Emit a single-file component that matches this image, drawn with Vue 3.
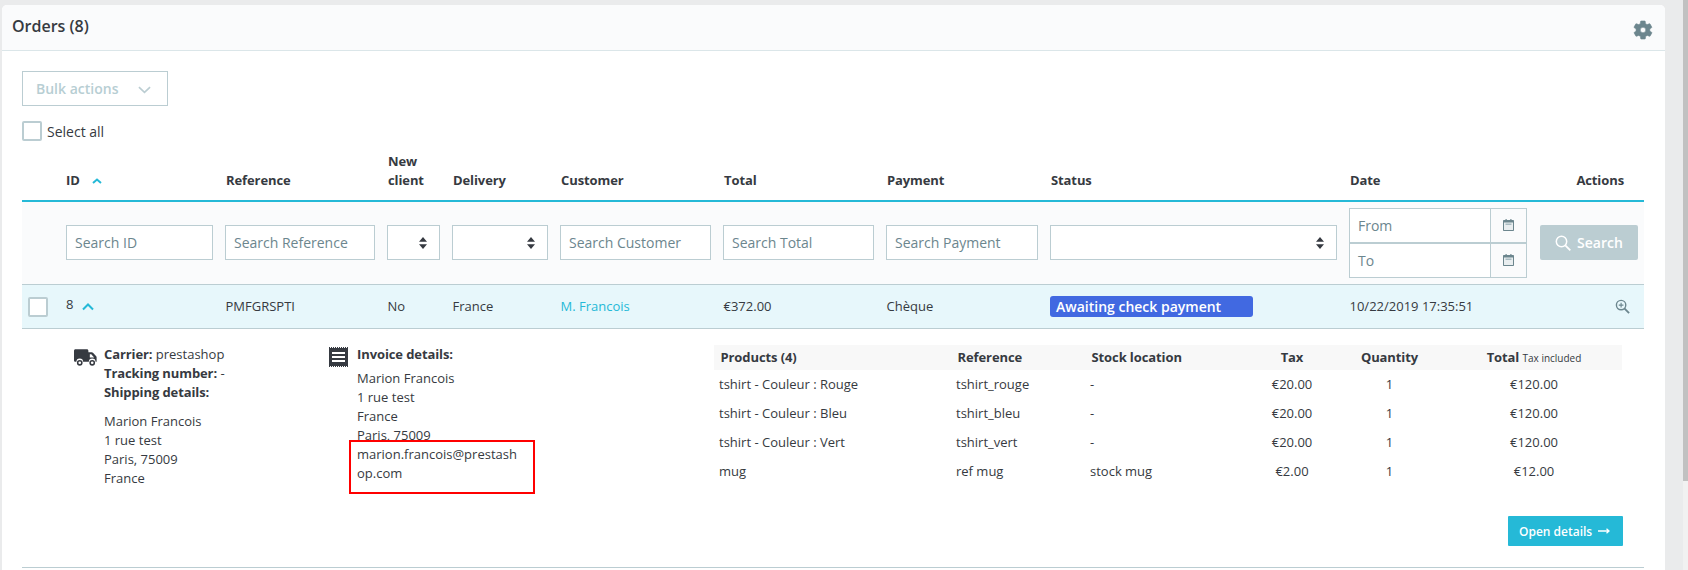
<script setup>
const columns = [
  { label: 'ID', ph: 'Search ID', type: 'input', sort: true },
  { label: 'Reference', ph: 'Search Reference', type: 'input' },
  { label: 'New client', type: 'select' },
  { label: 'Delivery', type: 'select' },
  { label: 'Customer', ph: 'Search Customer', type: 'input' },
  { label: 'Total', ph: 'Search Total', type: 'input' },
  { label: 'Payment', ph: 'Search Payment', type: 'input' },
  { label: 'Status', type: 'select' }
]
const products = [
  ['tshirt - Couleur : Rouge', 'tshirt_rouge', '-', '€20.00', '1', '€120.00'],
  ['tshirt - Couleur : Bleu', 'tshirt_bleu', '-', '€20.00', '1', '€120.00'],
  ['tshirt - Couleur : Vert', 'tshirt_vert', '-', '€20.00', '1', '€120.00'],
  ['mug', 'ref mug', 'stock mug', '€2.00', '1', '€12.00']
]
</script>

<template>
  <div class="page">
    <section class="card">
      <header class="card-head">
        <h3>Orders (8)</h3>
        <svg class="gear" viewBox="0 0 24 24"><path fill="#6c868e" stroke="#6c868e" stroke-width=".6" d="M19.4 13c.1-.3.1-.7.1-1s0-.7-.1-1l2.100-1.600c.2-.2.300-.4.100-.6l-2-3.500c-.1-.2-.4-.3-.6-.2l-2.500 1c-.5-.4-1.100-.7-1.700-1l-.4-2.600c0-.3-.2-.4-.5-.4h-4c-.2 0-.5.100-.5.400l-.4 2.600c-.6.300-1.200.600-1.700 1l-2.500-1c-.2-.1-.5 0-.6.200l-2 3.500c-.1.200-.1.400.1.600L4.500 11c0 .3-.1.700-.1 1s0 .7.1 1l-2.100 1.600c-.2.200-.3.400-.1.600l2 3.500c.1.200.4.300.6.200l2.500-1c.5.400 1.100.7 1.700 1l.4 2.600c0 .3.300.4.500.4h4c.3 0 .5-.1.500-.4l.4-2.600c.6-.3 1.200-.6 1.700-1l2.500 1c.2.100.5 0 .6-.2l2-3.500c.1-.2.100-.4-.1-.6L19.400 13zM12 15a3 3 0 1 1 0-6 3 3 0 0 1 0 6z"/></svg>
      </header>

      <div class="card-body">
        <button class="bulk" type="button">
          <span>Bulk actions</span>
          <svg viewBox="0 0 14 8" class="bulk-caret"><path d="M1 1 7 6.500 13 1" fill="none" stroke="#bbcdd2" stroke-width="1.800"/></svg>
        </button>
        <label class="select-all"><span class="check"></span>Select all</label>

        <div class="grid-row head-row">
          <div></div>
          <div v-for="c in columns" :key="c.label" class="th" :class="{ first: c.sort }">
            <span :class="{ narrow: c.label === 'New client' }">{{ c.label }}</span>
            <svg v-if="c.sort" class="sort" viewBox="0 0 10 6"><path d="M1 5 5 1.500 9 5" fill="none" stroke="#25b9d7" stroke-width="2"/></svg>
          </div>
          <div class="th">Date</div>
          <div class="th actions">Actions</div>
        </div>

        <div class="grid-row filter-row">
          <div></div>
          <template v-for="c in columns" :key="c.label">
            <div v-if="c.type === 'input'" class="field">{{ c.ph }}</div>
            <div v-else class="field select">
              <svg viewBox="0 0 8 12"><path fill="#363a41" d="M4 0 8 4.800H0zM4 12 0 7.200h8z"/></svg>
            </div>
          </template>
          <div class="dates">
            <div v-for="d in ['From', 'To']" :key="d" class="date">
              <span class="date-text">{{ d }}</span>
              <span class="date-icon">
                <svg viewBox="0 0 11 12">
                  <path fill="#6c868e" d="M1 1h1.500V0h1.200v1h3.600V0h1.200v1H10c.6 0 1 .4 1 1v9c0 .6-.4 1-1 1H1c-.6 0-1-.4-1-1V2c0-.6.400-1 1-1z"/>
                  <path fill="#e9eef0" d="M1 3.500h9V11H1z"/>
                  <path fill="#a9bcc2" d="M2.500 4.500h6V6h-6z"/>
                </svg>
              </span>
            </div>
          </div>
          <button class="search" type="button">
            <svg viewBox="0 0 16 16"><circle cx="6.500" cy="6.500" r="5.200" fill="none" stroke="#fff" stroke-width="1.500"/><path d="m10.300 10.300 5 5" stroke="#fff" stroke-width="1.800"/></svg>
            Search
          </button>
        </div>

        <div class="grid-row order-row">
          <div class="order-check"><span class="check"></span></div>
          <div class="order-id">
            <span>8</span>
            <svg viewBox="0 0 12 8"><path d="M1 6.500 6 1.500l5 5" fill="none" stroke="#25b9d7" stroke-width="2"/></svg>
          </div>
          <div class="cell">PMFGRSPTI</div>
          <div class="cell">No</div>
          <div class="cell">France</div>
          <div class="cell link">M. Francois</div>
          <div class="cell">€372.00</div>
          <div class="cell">Chèque</div>
          <div><span class="badge">Awaiting check payment</span></div>
          <div class="cell">10/22/2019 17:35:51</div>
          <div class="row-action">
            <svg viewBox="0 0 16 16"><circle cx="6.500" cy="6.500" r="5" fill="none" stroke="#6c868e" stroke-width="1.500"/><path d="m10 10 5 5" stroke="#6c868e" stroke-width="2"/><path d="M6.500 4v5M4 6.500h5" stroke="#6c868e" stroke-width="1.200"/></svg>
          </div>
        </div>

        <div class="details">
          <div class="shipping">
            <svg class="truck" viewBox="0 0 24 17">
              <path fill="#363a41" d="M1.500 0h12c.8 0 1.500.7 1.500 1.500V3h3.500c.5 0 1 .2 1.300.6l3.400 3.600c.2.300.4.600.4 1V13H22.500a3.500 3.500 0 0 0-7 0h-6a3.500 3.500 0 0 0-7 0H1.500C.7 13 0 12.300 0 11.500v-10C0 .7.700 0 1.500 0zM16.500 5v3.500H21L18 5z"/>
              <circle cx="6" cy="14" r="2.200" fill="#fff" stroke="#363a41" stroke-width="1.600"/>
              <circle cx="19" cy="14" r="2.200" fill="#fff" stroke="#363a41" stroke-width="1.600"/>
            </svg>
            <div class="lines">
              <div><b>Carrier:</b> prestashop</div>
              <div><b>Tracking number:</b> -</div>
              <div><b>Shipping details:</b></div>
              <div class="address">
                <div>Marion Francois</div>
                <div>1 rue test</div>
                <div>Paris, 75009</div>
                <div>France</div>
              </div>
            </div>
          </div>

          <div class="invoice">
            <svg class="receipt" viewBox="0 0 19 20">
              <path fill="#363a41" d="M0 1h19v18H0z"/>
              <path d="M0 .5h19M0 19.500h19" stroke="#363a41" stroke-dasharray="1 1"/>
              <path fill="#fff" d="M3 5h13v2H3zM3 9h13v2H3zM3 13h13v2H3z"/>
            </svg>
            <div class="lines">
              <div class="invoice-title"><b>Invoice details:</b></div>
              <div>Marion Francois</div>
              <div>1 rue test</div>
              <div>France</div>
              <div>Paris, 75009</div>
              <div class="email">marion.francois@prestashop.com</div>
            </div>
            <div class="highlight"></div>
          </div>

          <div class="products">
            <table>
              <colgroup>
                <col class="c1" /><col class="c2" /><col class="c3" /><col class="c4" /><col class="c5" /><col class="c6" />
              </colgroup>
              <thead>
                <tr>
                  <th>Products (4)</th>
                  <th>Reference</th>
                  <th>Stock location</th>
                  <th class="center">Tax</th>
                  <th class="center">Quantity</th>
                  <th class="center">Total <small>Tax included</small></th>
                </tr>
              </thead>
              <tbody>
                <tr v-for="p in products" :key="p[0]">
                  <td>{{ p[0] }}</td>
                  <td>{{ p[1] }}</td>
                  <td>{{ p[2] }}</td>
                  <td class="center">{{ p[3] }}</td>
                  <td class="center">{{ p[4] }}</td>
                  <td class="center">{{ p[5] }}</td>
                </tr>
              </tbody>
            </table>
            <div class="open-wrap">
              <button class="open" type="button">
                Open details
                <svg viewBox="0 0 12 8"><path d="M0 4h10.500M8.500 1.800 11 4 8.500 6.200" fill="none" stroke="#fff" stroke-width="1.300"/></svg>
              </button>
            </div>
          </div>
        </div>
      </div>
    </section>
    <div class="scrollbar"><div class="thumb"></div></div>
  </div>
</template>

<style>
html, body { margin: 0; overflow: hidden; }
</style>

<style scoped>
.page {
  width: 1688px;
  height: 570px;
  overflow: hidden;
  background: #eaebec;
  font-family: "Open Sans", sans-serif;
  font-size: 13px;
  line-height: 19px;
  color: #363a41;
  box-sizing: border-box;
  padding: 5px 23px 0 2px;
  display: flex;
  position: relative;
}
.card {
  flex: 1;
  height: 600px;
  background: #fff;
  border-radius: 5px 5px 0 0;
}
.card-head {
  height: 46px;
  box-sizing: border-box;
  background: #fafbfc;
  border-bottom: 1px solid #dbe6e9;
  border-radius: 5px 5px 0 0;
  display: flex;
  align-items: center;
  justify-content: space-between;
  padding: 0 11px 0 10px;
}
.card-head h3 {
  margin: 0;
  font-size: 16px;
  font-weight: 600;
  position: relative;
  top: -1px;
}
.gear { width: 22px; height: 22px; margin-top: 4px; }
.card-body { padding: 20px 21px 0 20px; }
.bulk {
  width: 146px;
  height: 35px;
  border: 1px solid #bbcdd2;
  background: #fff;
  color: #b7ced3;
  font: 600 14px "Open Sans", sans-serif;
  padding: 0 16px 0 13px;
  display: flex;
  align-items: center;
  justify-content: space-between;
  box-sizing: border-box;
}
.bulk-caret { width: 13px; height: 8px; margin-top: 2px; }
.select-all {
  display: flex;
  align-items: center;
  gap: 5px;
  margin-top: 15px;
  font-size: 14px;
  height: 20px;
}
.check {
  display: block;
  width: 20px;
  height: 20px;
  box-sizing: border-box;
  border: 2px solid #bbcdd2;
  border-radius: 2px;
  background: #fff;
}
.grid-row {
  display: grid;
  grid-template-columns: 32px 147px 150px 53px 96px 151px 151px 152px 287px 178px 99px;
  column-gap: 12px;
  padding-right: 5px;
}
.grid-row > :last-child { margin-left: 1px; }
.head-row {
  height: 61px;
  box-sizing: border-box;
  border-bottom: 2px solid #25b9d7;
  align-items: end;
  padding-bottom: 10px;
}
.th {
  font-size: 13px;
  line-height: 19px;
  font-weight: 700;
  letter-spacing: -0.1px;
  display: flex;
  align-items: center;
  gap: 12px;
  padding-left: 1px;
}
.th.first { padding-left: 0; }
.narrow { display: block; width: 40px; }
.sort { width: 10px; height: 6px; }
.actions { justify-content: flex-end; padding-right: 14px; }
.filter-row {
  height: 83px;
  box-sizing: border-box;
  background: #fafbfc;
  border-bottom: 1px solid #bbcdd2;
  padding-bottom: 1px;
  align-items: center;
}
.field {
  height: 35px;
  box-sizing: border-box;
  border: 1px solid #bbcdd2;
  background: #fff;
  color: #6c868e;
  font-size: 14px;
  padding-left: 8px;
  display: flex;
  align-items: center;
}
.select { justify-content: flex-end; padding-right: 12px; }
.select svg { width: 8px; height: 12px; }
.dates { display: flex; flex-direction: column; }
.date {
  height: 35px;
  box-sizing: border-box;
  border: 1px solid #bbcdd2;
  display: flex;
  color: #6c868e;
  font-size: 14px;
}
.date-text {
  flex: 1;
  background: #fff;
  padding-left: 8px;
  display: flex;
  align-items: center;
}
.date-icon {
  width: 35px;
  border-left: 1px solid #bbcdd2;
  display: flex;
  align-items: center;
  justify-content: center;
}
.date-icon svg { width: 11px; height: 12px; }
.search {
  height: 35px;
  border: 0;
  background: #bbcdd2;
  color: #fff;
  font: 600 14px "Open Sans", sans-serif;
  display: flex;
  align-items: center;
  justify-content: center;
  gap: 6px;
  padding: 0;
  border-radius: 2px;
}
.search svg { width: 16px; height: 16px; }
.order-row {
  height: 44px;
  box-sizing: border-box;
  background: #e7f7fb;
  border-bottom: 1px solid #bbcdd2;
  align-items: center;
}
.cell { padding-left: 0.5px; }
.order-check { padding-left: 6px; }
.order-id { display: flex; align-items: center; gap: 9px; }
.order-id span { position: relative; top: -2px; }
.order-id svg { width: 12px; height: 8px; }
.link { color: #25b9d7; }
.badge {
  display: block;
  width: 203px;
  height: 21px;
  box-sizing: border-box;
  background: #4169e1;
  color: #fff;
  font-size: 14px;
  font-weight: 600;
  line-height: 21px;
  padding-left: 6px;
  border-radius: 3px;
}
.row-action { display: flex; justify-content: flex-end; padding-right: 8px; }
.row-action svg { width: 15px; height: 15px; }
.details {
  height: 239px;
  box-sizing: border-box;
  border-bottom: 1px solid #bbcdd2;
  display: grid;
  grid-template-columns: 255px 385px 908px;
  padding: 16px 0 0 52px;
}
.shipping, .invoice { display: flex; align-items: flex-start; position: relative; }
.truck { width: 23px; height: 17px; margin-right: 7px; flex: none; margin-top: 4px; }
.receipt { width: 19px; height: 20px; margin-right: 9px; flex: none; margin-top: 2px; }
b { font-weight: 700; letter-spacing: -0.1px; }
.address { margin-top: 10px; }
.invoice-title { margin-bottom: 5px; }
.email { width: 160px; word-break: break-all; }
.highlight {
  position: absolute;
  left: 20px;
  top: 95px;
  width: 186px;
  height: 54px;
  box-sizing: border-box;
  border: 2px solid #f00;
}
table { border-collapse: collapse; table-layout: fixed; width: 908px; }
.c1 { width: 237px; } .c2 { width: 134px; } .c3 { width: 166px; }
.c4 { width: 82px; } .c5 { width: 113px; } .c6 { width: 176px; }
th {
  background: #f8f8f8;
  height: 25px;
  padding: 0 0 0 6.500px;
  text-align: left;
  font-size: 13px;
  font-weight: 700;
  letter-spacing: -0.1px;
}
td { height: 29px; padding: 0 0 0 5px; }
th.center, td.center { text-align: center; padding: 0; }
small { font-size: 10px; font-weight: 400; letter-spacing: 0; }
.open-wrap { display: flex; justify-content: flex-end; margin-top: 30px; }
.open {
  width: 115px;
  height: 30px;
  border: 0;
  border-radius: 1px;
  background: #25b9d7;
  color: #fff;
  font: 600 12px "Open Sans", sans-serif;
  padding: 0 0 0 11px;
  margin-right: -1px;
  display: flex;
  align-items: center;
  gap: 6px;
}
.open svg { width: 12px; height: 8px; }
.scrollbar {
  position: absolute;
  right: 0;
  top: 0;
  width: 5px;
  height: 570px;
  background: #f1f1f1;
}
.thumb { height: 481px; background: #c1c1c1; }
</style>
